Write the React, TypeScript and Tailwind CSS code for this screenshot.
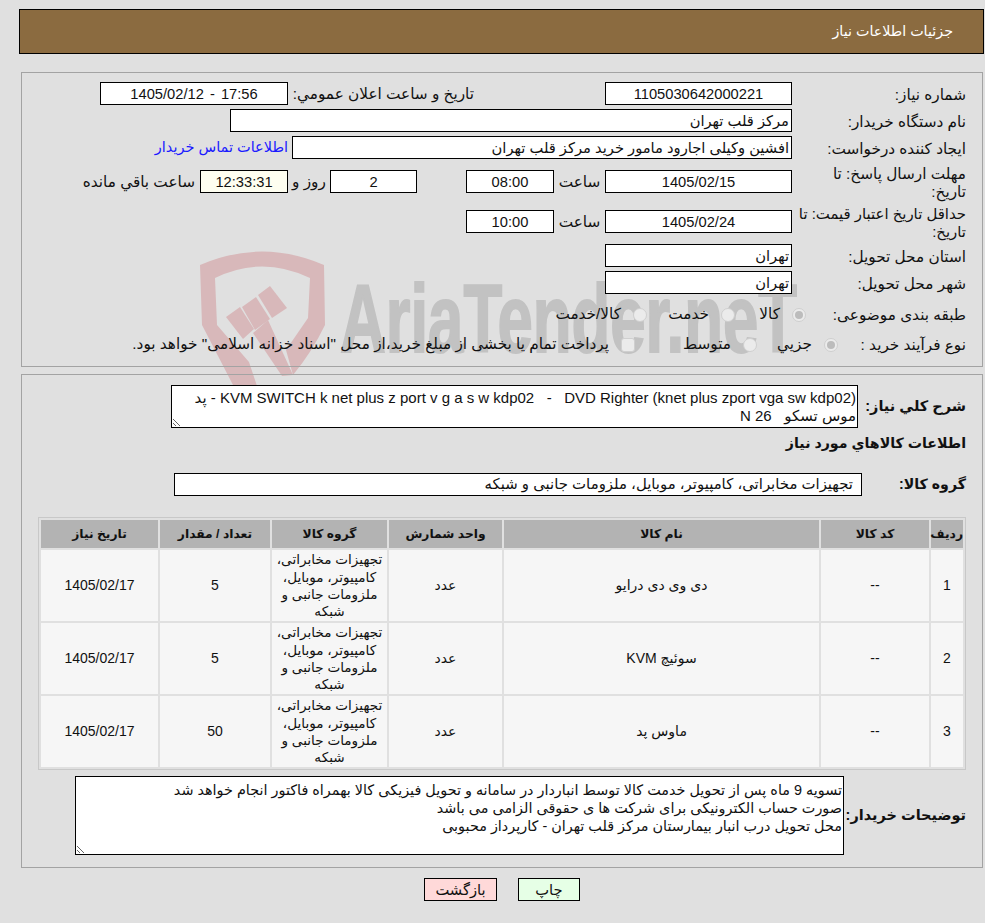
import React from 'react';

const groupText = 'تجهیزات مخابراتی، کامپیوتر، موبایل، ملزومات جانبی و شبکه';

const rows = [
  { no: '1', code: '--', name: 'دی وی دی درایو', unit: 'عدد', qty: '5', date: '1405/02/17' },
  { no: '2', code: '--', name: 'سوئیچ KVM', unit: 'عدد', qty: '5', date: '1405/02/17' },
  { no: '3', code: '--', name: 'ماوس پد', unit: 'عدد', qty: '50', date: '1405/02/17' },
];

const Box = ({ className = 'bg-white', children }: { className?: string; children?: React.ReactNode }) => (
  <div className={`h-[23px] shrink-0 border border-black pt-px text-[14.7px] leading-[21px] ${className}`}>{children}</div>
);

const Label = ({ className = '', children }: { className?: string; children: React.ReactNode }) => (
  <div className={`w-[174px] shrink-0 pt-[2px] leading-[18px] ${className}`}>{children}</div>
);

const Radio = ({ label, checked, square, className = '' }: { label: string; checked?: boolean; square?: boolean; className?: string }) => (
  <label className={`flex shrink-0 items-center ${className}`}>
    <span className={`flex h-[14px] w-[14px] shrink-0 items-center justify-center border border-[#cfcfcf] bg-[#ebebeb] ${square ? 'rounded-[3px]' : 'rounded-full'}`}>
      {checked && <span className="h-[8px] w-[8px] rounded-full bg-[#bcbcbc]" />}
    </span>
    <span className="mr-[12px]">{label}</span>
  </label>
);

const Watermark = () => (
  <svg className="absolute left-[190px] top-[245px] z-0" width="620" height="145" viewBox="190 245 620 145">
    <g fill="#d8b8ba">
      {/* left side of the shield with the top arc */}
      <path d="M200 265 Q262 238 324 265 L325 325 Q312 352 293 375 L286 350 L308 318 L310 278 Q262 255 215 278 L217 325 L249 362 L257 386 L233 385 L202 325 Z" />
      {/* gavel */}
      <path d="M258 295 L270 286 L287 308 L272 318 Z" />
      <path d="M242 307 L256 297 L270 319 L255 330 Z" />
      <path d="M226 317 L240 307 L254 329 L243 339 Z" />
      <path d="M253 333 L268 320 L293 375 L282 376 Z" />
    </g>
    <text x="340" y="352" fill="#c2c2c2" stroke="#c2c2c2" strokeWidth="2" fontSize="96" fontWeight="700" textLength="457" lengthAdjust="spacingAndGlyphs" fontFamily="'Liberation Sans', sans-serif" direction="ltr">
      AriaTender.neT
    </text>
  </svg>
);

export default function App() {
  return (
    <div dir="rtl" className="relative h-[923px] overflow-hidden bg-[#e0e0e0] pl-[19px] pt-[9px] font-['Liberation_Sans','DejaVu_Sans',sans-serif] text-[15.3px] text-[#111]">
      <Watermark />
      <div className="relative z-10">
        <div className="mr-px flex h-[45px] items-center border border-black bg-[#8b6b40] pr-[30px] text-[14.3px] text-white">جزئیات اطلاعات نیاز</div>

        <div className="ml-[2px] mr-[2px] mt-[18px] h-[295px] border border-[#a3a3a3] pr-[16px] pt-[9px]">
          <div className="flex h-[23px] items-center">
            <Label>شماره نیاز:</Label>
            <Box className="w-[187px] bg-white text-center">1105030642000221</Box>
            <div className="mr-[131px] w-[181px] shrink-0 whitespace-nowrap pt-px">تاریخ و ساعت اعلان عمومي:</div>
            <Box className="mr-[5px] w-[188px] bg-white text-center [word-spacing:2px]">17:56 - 1405/02/12</Box>
          </div>
          <div className="mt-[4px] flex h-[23px] items-center">
            <Label>نام دستگاه خریدار:</Label>
            <Box className="w-[562px] bg-white pr-[2px]">مرکز قلب تهران</Box>
          </div>
          <div className="mt-[4px] flex h-[23px] items-center">
            <Label>ایجاد کننده درخواست:</Label>
            <Box className="w-[500px] bg-white pr-[2px]">افشین وکیلی اجارود مامور خرید مرکز قلب تهران</Box>
            <a className="mr-[4px] shrink-0 text-[14.5px] text-[#1a1aff]">اطلاعات تماس خریدار</a>
          </div>
          <div className="mt-[11px] flex h-[23px] items-center">
            <Label>مهلت ارسال پاسخ: تا<br />تاریخ:</Label>
            <Box className="w-[187px] bg-white text-center">1405/02/15</Box>
            <div className="w-[51px] shrink-0 pt-px text-center">ساعت</div>
            <Box className="w-[88px] bg-white text-center">08:00</Box>
            <Box className="mr-[49px] w-[87px] bg-white text-center">2</Box>
            <div className="w-[42px] shrink-0 pt-px text-center">روز و</div>
            <Box className="w-[88px] bg-[#fefef0] text-center">12:33:31</Box>
            <div className="mr-[5px] shrink-0 pt-px">ساعت باقي مانده</div>
          </div>
          <div className="mt-[17px] flex h-[23px] items-center">
            <Label className="text-[14.9px]">حداقل تاریخ اعتبار قیمت: تا<br />تاریخ:</Label>
            <Box className="w-[187px] bg-white text-center">1405/02/24</Box>
            <div className="w-[51px] shrink-0 pt-px text-center">ساعت</div>
            <Box className="w-[88px] bg-white text-center">10:00</Box>
          </div>
          <div className="mt-[11px] flex h-[23px] items-center">
            <Label>استان محل تحویل:</Label>
            <Box className="w-[187px] bg-white pr-[2px]">تهران</Box>
          </div>
          <div className="mt-[4px] flex h-[23px] items-center">
            <Label>شهر محل تحویل:</Label>
            <Box className="w-[187px] bg-white pr-[2px]">تهران</Box>
          </div>
          <div className="mt-[9px] flex h-[23px] items-center">
            <div className="w-[160px] shrink-0 pt-px">طبقه بندی موضوعی:</div>
            <Radio label="کالا" checked className="w-[71px]" />
            <Radio label="خدمت" className="w-[88px]" />
            <Radio label="کالا/خدمت" />
          </div>
          <div className="mt-[7px] flex h-[23px] items-center">
            <div className="w-[128px] shrink-0 pt-px">نوع فرآیند خرید :</div>
            <Radio label="جزيي" checked className="w-[81px]" />
            <Radio label="متوسط" className="w-[122px]" />
            <Radio label={'پرداخت تمام یا بخشی از مبلغ خرید،از محل "اسناد خزانه اسلامی" خواهد بود.'} square />
          </div>
        </div>

        <div className="ml-[2px] mr-[2px] mt-[7px] h-[494px] border border-[#a3a3a3] pr-[16px] pt-[10px]">
          <div className="flex items-center">
            <div className="w-[108px] shrink-0 text-[14.5px] font-bold">شرح كلي نياز:</div>
            <textarea
              readOnly
              dir="rtl"
              className="h-[43px] w-[687px] shrink-0 border border-black bg-white pb-0 pl-[3px] pr-[1px] pt-[3px] text-[15px] leading-[18px] outline-none"
              defaultValue={'KVM SWITCH k net plus z port v g a s w kdp02   -   DVD Righter (knet plus zport vga sw kdp02) - پد\nموس تسکو   N 26'}
            />
          </div>
          <div className="mt-[6px] text-[14.2px] font-bold leading-[18px]">اطلاعات كالاهاي مورد نياز</div>
          <div className="mt-[21px] flex items-center">
            <div className="w-[104px] shrink-0 text-[14.2px] font-bold">گروه کالا:</div>
            <div className="h-[23px] w-[688px] shrink-0 border border-black bg-white pr-[8px] text-[14.9px] leading-[21px]">{groupText}</div>
          </div>

          <table className="mt-[21px] w-[928px] table-fixed border-separate border-spacing-[2px] border border-[#c8c8c8] text-center text-[14px] leading-[17.3px]">
            <colgroup>
              <col className="w-[32px]" />
              <col className="w-[108px]" />
              <col className="w-[315px]" />
              <col className="w-[113px]" />
              <col className="w-[115px]" />
              <col className="w-[110px]" />
              <col className="w-[117px]" />
            </colgroup>
            <thead>
              <tr className="h-[28px] bg-[#b3b3b3] text-[12.3px] [&>th]:pt-px [&>th]:font-bold">
                <th>ردیف</th>
                <th>کد کالا</th>
                <th>نام کالا</th>
                <th>واحد شمارش</th>
                <th>گروه کالا</th>
                <th>تعداد / مقدار</th>
                <th>تاریخ نیاز</th>
              </tr>
            </thead>
            <tbody>
              {rows.map((r) => (
                <tr key={r.no} className="h-[71px] bg-[#f6f6f6] [&>td]:pt-px">
                  <td>{r.no}</td>
                  <td>{r.code}</td>
                  <td>{r.name}</td>
                  <td>{r.unit}</td>
                  <td className="text-[13.6px]">{groupText}</td>
                  <td>{r.qty}</td>
                  <td>{r.date}</td>
                </tr>
              ))}
            </tbody>
          </table>

          <div className="mt-[6px] flex items-center">
            <div className="w-[122px] shrink-0 text-[14.5px] font-bold">توضیحات خریدار:</div>
            <textarea
              readOnly
              dir="rtl"
              className="h-[79px] w-[769px] shrink-0 border border-black bg-white pb-0 pl-[3px] pr-[1px] pt-[4px] text-[14.4px] leading-[18px] outline-none"
              defaultValue={
                'تسویه 9 ماه پس از تحویل خدمت کالا توسط انباردار در سامانه و تحویل فیزیکی کالا بهمراه فاکتور انجام خواهد شد\nصورت حساب الکترونیکی برای شرکت ها ی حقوقی الزامی می باشد\nمحل تحویل درب انبار بیمارستان مرکز قلب تهران - کارپرداز محبوبی'
              }
            />
          </div>
        </div>

        <div className="mt-[10px] flex justify-center gap-[21px] text-[14.7px]">
          <button className="h-[23px] w-[62px] border border-black bg-[#e6ffe6]">چاپ</button>
          <button className="h-[23px] w-[73px] border border-black bg-[#ffd9d9]">بازگشت</button>
        </div>
      </div>
    </div>
  );
}
